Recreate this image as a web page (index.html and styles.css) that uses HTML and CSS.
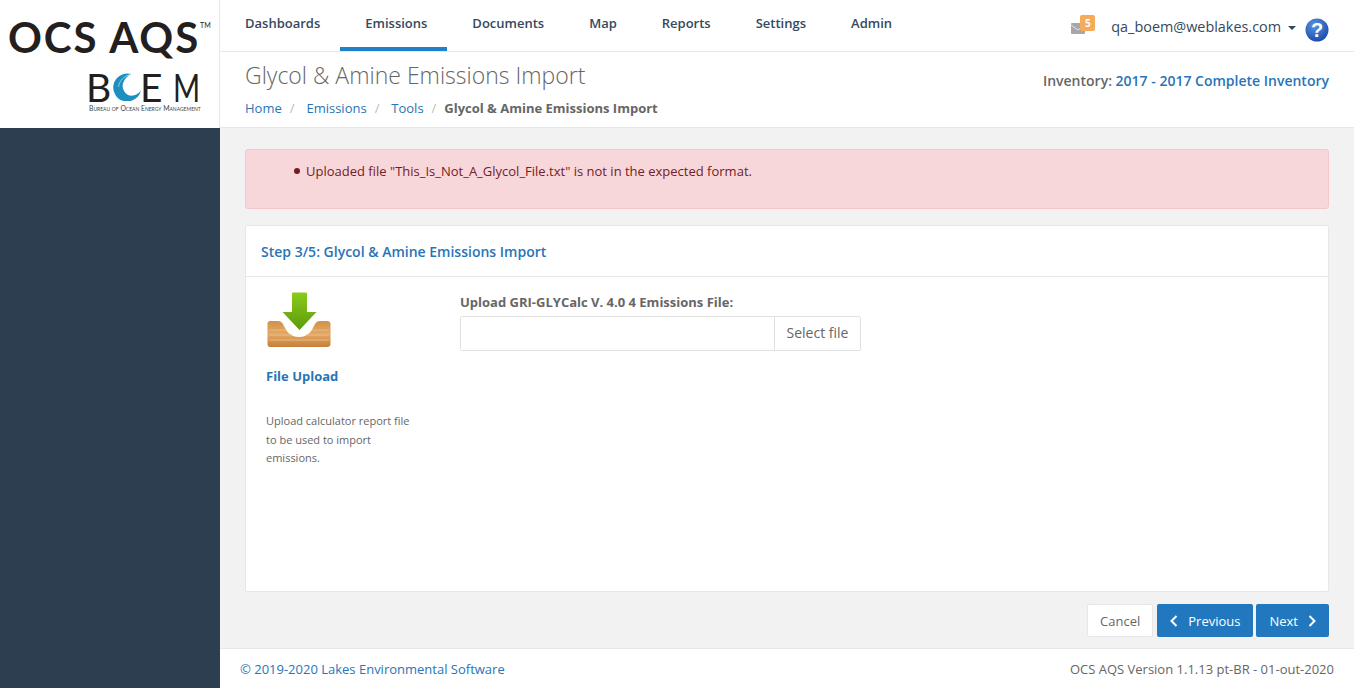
FILE: index.html
```html
<!DOCTYPE html>
<html lang="en">
<head>
  <meta charset="UTF-8">
  <title>Glycol &amp; Amine Emissions Import</title>
  <link rel="stylesheet" href="styles.css">
</head>
<body>

  <div class="sidebar">
    <div class="logo">
      <div class="logo-aqs">OCS AQS<span class="logo-tm">TM</span></div>
      <div class="logo-boem">
        <span class="logo-b">B</span>
        <svg class="logo-wave" width="30" height="28" viewBox="0 0 30 28">
          <path d="M19 1 A14 14 0 1 0 29 17 C27 21 21 24 16 22 C11 19 9 13 12 8 C13.500 5 16 2.500 19 1 Z" fill="#1c8fc0"/>
          <path d="M19 1 C12 3 7 8 6.500 14" stroke="#8ccbe4" stroke-width="1" fill="none"/>
        </svg>
        <span class="logo-e">E</span>
        <span class="logo-m">M</span>
      </div>
      <div class="logo-sub">Bureau of Ocean Energy Management</div>
    </div>
  </div>

  <div class="main">
    <div class="topnav">
      <a class="nav-link" href="#">Dashboards</a>
      <a class="nav-link active" href="#">Emissions</a>
      <a class="nav-link" href="#">Documents</a>
      <a class="nav-link" href="#">Map</a>
      <a class="nav-link" href="#">Reports</a>
      <a class="nav-link" href="#">Settings</a>
      <a class="nav-link" href="#">Admin</a>
      <div class="nav-right">
        <div class="mail">
          <svg width="14" height="11" viewBox="0 0 14 11">
            <rect width="14" height="11" rx="1" fill="#a6a8aa"/>
            <path d="M0 2 L7 7 L14 2" stroke="#e4e4e4" fill="none"/>
          </svg>
          <span class="mail-badge">5</span>
        </div>
        <span class="user">qa_boem@weblakes.com</span>
        <span class="caret"></span>
        <svg class="help" width="24" height="24" viewBox="0 0 24 24">
          <defs>
            <radialGradient id="helpBg" cx="0.4" cy="0.3" r="0.8">
              <stop offset="0" stop-color="#5b93e0"/>
              <stop offset="1" stop-color="#1245a5"/>
            </radialGradient>
          </defs>
          <circle cx="12" cy="12" r="11.500" fill="url(#helpBg)"/>
          <text x="12" y="18.500" text-anchor="middle" class="help-mark">?</text>
        </svg>
      </div>
    </div>

    <div class="page-head">
      <div>
        <h1>Glycol &amp; Amine Emissions Import</h1>
        <div class="crumbs">
          <a href="#">Home</a><span class="sep">/</span>
          <a href="#">Emissions</a><span class="sep">/</span>
          <a href="#">Tools</a><span class="sep">/</span>
          <strong>Glycol &amp; Amine Emissions Import</strong>
        </div>
      </div>
      <div class="inventory">Inventory: <a href="#">2017 - 2017 Complete Inventory</a></div>
    </div>

    <div class="content">
      <div class="alert">
        <ul>
          <li>Uploaded file "This_Is_Not_A_Glycol_File.txt" is not in the expected format.</li>
        </ul>
      </div>

      <div class="card">
        <div class="card-head">Step 3/5: Glycol &amp; Amine Emissions Import</div>
        <div class="card-body">
          <div class="step-info">
            <svg class="upload-icon" width="64" height="56" viewBox="0 0 64 56">
              <defs>
                <linearGradient id="wood" x1="0" y1="0" x2="0" y2="1">
                  <stop offset="0" stop-color="#d2914a"/>
                  <stop offset="0.5" stop-color="#e3a866"/>
                  <stop offset="1" stop-color="#c67f38"/>
                </linearGradient>
                <linearGradient id="arrow" x1="0" y1="0" x2="0" y2="1">
                  <stop offset="0" stop-color="#8acb1c"/>
                  <stop offset="1" stop-color="#5d9a0c"/>
                </linearGradient>
              </defs>
              <path d="M3 29 H11 C15 29 16 32 18 36 C21 42 26 45 32 45 C38 45 43 42 46 36 C48 32 49 29 53 29 H60 Q63.500 29 63.500 32 V52 Q63.500 55 60 55 H3 Q0.500 55 0.500 52 V32 Q0.500 29 3 29 Z" fill="url(#wood)"/>
              <path d="M2 38 H19 M45 38 H62 M2 43 H25 M39 43 H62 M2 48 H62" stroke="#eec48e" stroke-width="0.800" fill="none"/>
              <path d="M25 1.500 Q25 0.500 26.500 0.500 H38.500 Q40 0.500 40 1.500 V20 H49.500 L32.500 38 L15.500 20 H25 Z" fill="url(#arrow)"/>
            </svg>
            <div class="step-title">File Upload</div>
            <p class="step-desc">Upload calculator report file to be used to import emissions.</p>
          </div>
          <div class="upload-form">
            <label class="upload-label" for="emFile">Upload GRI-GLYCalc V. 4.0 4 Emissions File:</label>
            <div class="file-group">
              <input class="file-text" id="emFile" type="text">
              <span class="file-btn">Select file</span>
            </div>
          </div>
        </div>
      </div>

      <div class="actions">
        <button class="btn btn-default">Cancel</button>
        <button class="btn btn-primary">
          <svg width="8" height="12" viewBox="0 0 8 12"><path d="M6.500 1 L1.500 6 L6.500 11" stroke="#fff" stroke-width="2" fill="none"/></svg>
          Previous
        </button>
        <button class="btn btn-primary">
          Next
          <svg width="8" height="12" viewBox="0 0 8 12"><path d="M1.500 1 L6.500 6 L1.500 11" stroke="#fff" stroke-width="2" fill="none"/></svg>
        </button>
      </div>
    </div>

    <div class="footer">
      <a href="#">© 2019-2020 Lakes Environmental Software</a>
      <span>OCS AQS Version 1.1.13 pt-BR - 01-out-2020</span>
    </div>
  </div>

</body>
</html>
```

FILE: styles.css
```css
html, body {
  height: 100%;
}

body {
  margin: 0;
  display: flex;
  height: 688px;
  overflow: hidden;
  font-family: 'Open Sans', sans-serif;
  font-size: 13px;
  color: #666;
  background: #f2f2f2;
}

a {
  color: #2874b8;
  text-decoration: none;
}

/* left column */
.sidebar {
  width: 220px;
  flex-shrink: 0;
  background: #2c3e50;
}

.logo {
  height: 128px;
  box-sizing: border-box;
  background: #fff;
  border-right: 1px solid #e7e7e7;
  padding-top: 15px;
}

.logo-aqs {
  display: flex;
  align-items: flex-start;
  padding-left: 8px;
  height: 44px;
  font-family: 'Lato', sans-serif;
  font-size: 42px;
  line-height: 44px;
  font-weight: 700;
  letter-spacing: 1.900px;
  color: #231f20;
  white-space: nowrap;
}

.logo-tm {
  font-size: 7px;
  line-height: 8px;
  margin: 6px 0 0 0;
  letter-spacing: 0;
  font-weight: 400;
}

.logo-boem {
  display: flex;
  align-items: center;
  height: 28px;
  margin: 14px 0 0 89px;
  font-family: 'Lato', sans-serif;
  font-size: 39px;
  line-height: 28px;
  font-weight: 400;
  color: #231f20;
  white-space: nowrap;
}

.logo-b {
  width: 23px;
  margin-left: -3px;
}

.logo-wave {
  margin-left: 3px;
}

.logo-e {
  width: 33px;
  margin-left: -2px;
}

.logo-m {
  transform: scaleX(0.75);
  transform-origin: left center;
}

.logo-sub {
  margin: 4px 0 0 89px;
  font-family: 'Lato', sans-serif;
  font-variant: small-caps;
  font-size: 6.800px;
  line-height: 7px;
  color: #444;
  white-space: nowrap;
}

/* right column */
.main {
  flex: 1;
  min-width: 0;
  display: flex;
  flex-direction: column;
}

.topnav {
  height: 52px;
  box-sizing: border-box;
  display: flex;
  background: #fff;
  border-bottom: 1px solid #e7e7e7;
}

.nav-link {
  height: 51px;
  box-sizing: border-box;
  padding: 14px 20px 0 25px;
  font-weight: 600;
  line-height: 18px;
  color: #34495e;
  border-bottom: 4px solid transparent;
}

.nav-link.active {
  border-bottom-color: #1f82c9;
}

.nav-right {
  margin-left: auto;
  display: flex;
  align-items: center;
  padding: 5px 25px 0 0;
  height: 46px;
}

.mail {
  position: relative;
  display: flex;
  margin: 0 26px 0 0;
}

.mail-badge {
  position: absolute;
  left: 9px;
  top: -8px;
  width: 15px;
  height: 16px;
  border-radius: 2px;
  background: #f6ab5b;
  color: #fff;
  font-size: 10px;
  font-weight: 700;
  line-height: 16px;
  text-align: center;
}

.user {
  font-size: 14.400px;
  line-height: 20px;
  color: #34495e;
  margin-top: -3px;
}

.caret {
  width: 0;
  height: 0;
  margin: 0 9px 0 7px;
  border-left: 4px solid transparent;
  border-right: 4px solid transparent;
  border-top: 4px solid #34495e;
}

.help {
  margin-top: 4px;
}

.help-mark {
  font-family: 'Liberation Sans', sans-serif;
  font-size: 20px;
  font-weight: 700;
  fill: #fff;
}

.page-head {
  height: 76px;
  box-sizing: border-box;
  display: flex;
  justify-content: space-between;
  padding: 7px 25px 0;
  background: #fff;
  border-bottom: 1px solid #e7e7e7;
}

h1 {
  margin: 0;
  font-size: 23px;
  line-height: 32px;
  font-weight: 300;
  color: #666;
}

.crumbs {
  margin-top: 8px;
  line-height: 18px;
}

.sep {
  margin: 0 8.500px 0 8px;
  color: #bbb;
}

.crumbs strong {
  margin-left: -4px;
  font-weight: 700;
  color: #666;
}

.inventory {
  margin-top: 12px;
  font-size: 14px;
  line-height: 20px;
  font-weight: 600;
}

.content {
  flex: 1;
  display: flex;
  flex-direction: column;
  padding: 21px 25px 11px;
}

.alert {
  height: 60px;
  box-sizing: border-box;
  margin-bottom: 16px;
  background: #f8d7da;
  border: 1px solid #f5c6cb;
  border-radius: 3px;
  color: #721c24;
}

.alert ul {
  margin: 12px 0 0;
  padding-left: 48px;
  list-style: none;
}

.alert li {
  display: flex;
  align-items: center;
  gap: 6px;
  line-height: 18px;
}

.alert li::before {
  content: "";
  width: 6px;
  height: 6px;
  border-radius: 50%;
  background: #721c24;
}

.card {
  flex: 1;
  display: flex;
  flex-direction: column;
  background: #fff;
  border: 1px solid #e7e7e7;
  border-radius: 2px;
}

.card-head {
  height: 51px;
  box-sizing: border-box;
  padding: 16px 15px 0;
  border-bottom: 1px solid #e7e7e7;
  font-size: 14px;
  line-height: 20px;
  font-weight: 600;
  color: #2874b8;
}

.card-body {
  flex: 1;
  display: flex;
  padding: 15px 20px;
}

.step-info {
  width: 194px;
  flex-shrink: 0;
}

.upload-icon {
  display: block;
  margin-left: 1px;
}

.step-title {
  margin-top: 19px;
  font-weight: 700;
  line-height: 18px;
  color: #2874b8;
}

.step-desc {
  width: 150px;
  margin: 27px 0 0;
  font-size: 11px;
  line-height: 18.500px;
}

.upload-label {
  display: block;
  font-weight: 700;
  line-height: 18px;
  margin-top: 1px;
}

.file-group {
  display: flex;
  width: 401px;
  height: 35px;
  margin-top: 5px;
  box-sizing: border-box;
  border: 1px solid #e1e1e1;
  border-radius: 2px;
}

.file-text {
  flex: 1;
  min-width: 0;
  border: 0;
  padding: 0;
  outline: none;
}

.file-btn {
  width: 86px;
  box-sizing: border-box;
  border-left: 1px solid #e1e1e1;
  font-size: 14px;
  line-height: 32px;
  text-align: center;
}

.actions {
  display: flex;
  justify-content: flex-end;
  gap: 3px;
  margin-top: 12px;
}

.btn {
  height: 33px;
  box-sizing: border-box;
  display: flex;
  align-items: center;
  gap: 10px;
  padding: 0 12px;
  border: 1px solid transparent;
  border-radius: 2px;
  font-family: inherit;
  font-size: 13px;
}

.btn-default {
  margin-right: 1px;
  background: #fff;
  border-color: #e7e7e7;
  color: #666;
}

.btn-primary {
  background: #2278be;
  color: #fff;
}

.footer {
  height: 40px;
  box-sizing: border-box;
  display: flex;
  justify-content: space-between;
  align-items: center;
  padding: 0 20px;
  background: #fff;
  border-top: 1px solid #e7e7e7;
}
```
